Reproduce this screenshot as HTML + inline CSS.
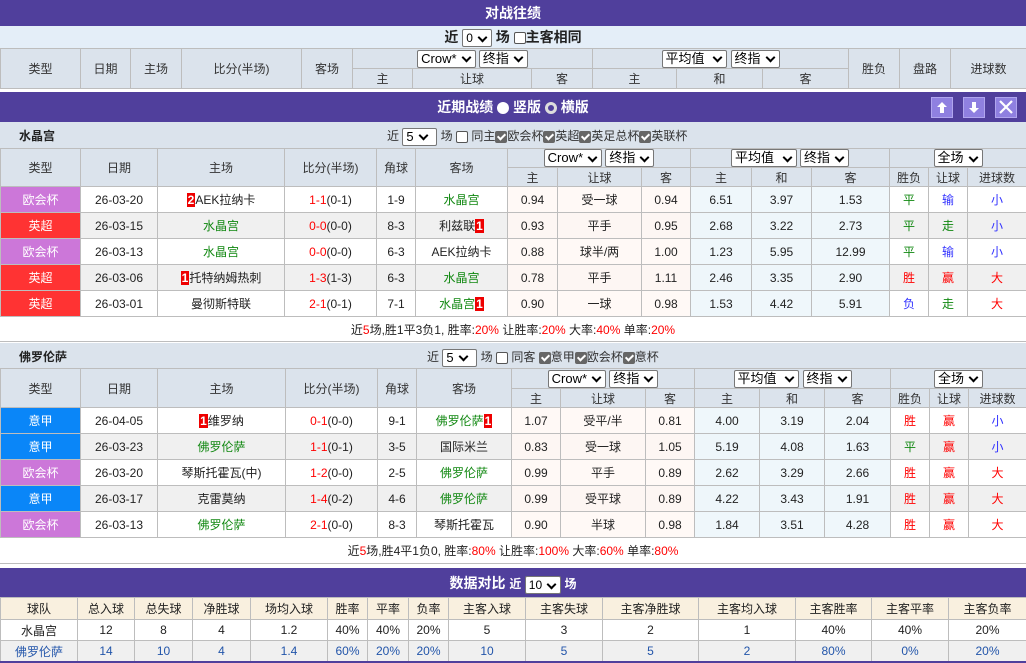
<!DOCTYPE html>
<html><head><meta charset="utf-8">
<style>
*{box-sizing:border-box;margin:0;padding:0}
body{width:1026px;height:663px;overflow:hidden;background:#fff;font-family:"Liberation Sans","Noto Sans CJK SC",sans-serif;font-size:12px;color:#222;position:relative}
.abs{position:absolute;left:0;width:1026px}
.bar{background:#503f9c;color:#fff;font-weight:bold;text-align:center;font-size:14px}
table{border-collapse:collapse;table-layout:fixed;width:1026px}
td{border:1px solid #bdbdbd;text-align:center;white-space:nowrap;overflow:hidden;padding:0}
.hd td{background:#dbe3ec;color:#333}
.sel{display:inline-block;border:1px solid #777;border-radius:2px;background:#fff;color:#000;height:18px;line-height:16px;padding:0 3px;font-size:13px;font-weight:normal;vertical-align:middle;text-align:left}
.sel:after{content:"";display:inline-block;width:5px;height:5px;border-right:2px solid #000;border-bottom:2px solid #000;transform:rotate(45deg);margin:0 2px 3px 6px;vertical-align:middle}
.cb{display:inline-block;width:12px;height:12px;border:1px solid #555;border-radius:2px;background:#fff;vertical-align:middle}
.ck{display:inline-block;width:12px;height:12px;border-radius:2px;background:#666;vertical-align:middle;position:relative}
.ck:after{content:"";position:absolute;left:4px;top:1px;width:3px;height:6px;border-right:2px solid #fff;border-bottom:2px solid #fff;transform:rotate(45deg)}
.g{color:#118811}.r{color:#ff0000}.b{color:#3333ff}
.cr{background:#fff9f6}.av{background:#eff7fb}
tr.alt td{background:#f0f0f0}
tr.alt td.cr{background:#fdf6f3}tr.alt td.av{background:#eef6fa}
tr td.ou{background:#cc77d9;color:#fff}tr td.yc{background:#ff3333;color:#fff}tr td.yj{background:#0a86f8;color:#fff}
.n{background:#e00;color:#fff;padding:0 1px;font-weight:bold}
.team{background:#dbe3ec;font-weight:bold}
.cream td{background:#f9f0df}
.blue td{color:#2255aa;background:#f0f0f0}
.ibtn{position:absolute;top:97px;width:22px;height:21px;background:#8f80e0;border:1px solid #b0a5ee}
</style></head><body>

<div class="abs bar" style="top:0;height:26px;line-height:26px">对战往绩</div>
<div class="abs" style="top:26px;height:22px;background:#e4eef8;text-align:center;font-weight:bold;font-size:14px;line-height:22px">近 <span class="sel" style="font-size:12px">0</span> 场 <span class="cb"></span>主客相同</div>

<table class="abs hd" style="top:48px">
<colgroup><col style="width:80px"><col style="width:50px"><col style="width:51px"><col style="width:120px"><col style="width:51px"><col style="width:60px"><col style="width:119px"><col style="width:61px"><col style="width:84px"><col style="width:86px"><col style="width:86px"><col style="width:51px"><col style="width:51px"><col style="width:76px"></colgroup>
<tr style="height:20px"><td rowspan="2">类型</td><td rowspan="2">日期</td><td rowspan="2">主场</td><td rowspan="2">比分(半场)</td><td rowspan="2">客场</td><td colspan="3"><span class="sel">Crow*</span> <span class="sel">终指</span></td><td colspan="3"><span class="sel">平均值 </span> <span class="sel">终指</span></td><td rowspan="2">胜负</td><td rowspan="2">盘路</td><td rowspan="2">进球数</td></tr>
<tr style="height:20px"><td>主</td><td>让球</td><td>客</td><td>主</td><td>和</td><td>客</td></tr>
</table>

<div class="abs bar" style="top:92px;height:30px;line-height:30px">近期战绩 <span style="display:inline-block;width:12px;height:12px;border-radius:50%;background:#fff;vertical-align:middle"></span> 竖版 <span style="display:inline-block;width:12px;height:12px;border-radius:50%;border:3px solid #ddd;vertical-align:middle"></span> 横版</div>
<div class="ibtn" style="left:931px"><svg width="20" height="19" viewBox="0 0 20 19"><path d="M10 4 L5 9 H8 V15 H12 V9 H15 Z" fill="#fff"/></svg></div>
<div class="ibtn" style="left:963px"><svg width="20" height="19" viewBox="0 0 20 19"><path d="M10 15 L5 10 H8 V4 H12 V10 H15 Z" fill="#fff"/></svg></div>
<div class="ibtn" style="left:995px"><svg width="20" height="19" viewBox="0 0 20 19"><path d="M4 3 L16 15 M16 3 L4 15" stroke="#fff" stroke-width="2.2"/></svg></div>

<div class="abs team" style="top:122px;height:26px;line-height:28px"><span style="position:absolute;left:19px">水晶宫</span><span style="position:absolute;left:387px;font-weight:normal;color:#333">近 <span class="sel" style="width:35px">5</span> 场 <span class="cb"></span> 同主<span class="ck"></span>欧会杯<span class="ck"></span>英超<span class="ck"></span>英足总杯<span class="ck"></span>英联杯</span></div>

<table class="abs" style="top:148px">
<colgroup><col style="width:80px"><col style="width:77px"><col style="width:127px"><col style="width:92px"><col style="width:39px"><col style="width:92px"><col style="width:50px"><col style="width:84px"><col style="width:49px"><col style="width:61px"><col style="width:60px"><col style="width:78px"><col style="width:39px"><col style="width:39px"><col style="width:59px"></colgroup>
<tbody class="hd">
<tr style="height:19px"><td rowspan="2">类型</td><td rowspan="2">日期</td><td rowspan="2">主场</td><td rowspan="2">比分(半场)</td><td rowspan="2">角球</td><td rowspan="2">客场</td><td colspan="3"><span class="sel">Crow*</span> <span class="sel">终指</span></td><td colspan="3"><span class="sel">平均值 </span> <span class="sel">终指</span></td><td colspan="3"><span class="sel">全场</span></td></tr>
<tr style="height:19px"><td>主</td><td>让球</td><td>客</td><td>主</td><td>和</td><td>客</td><td>胜负</td><td>让球</td><td>进球数</td></tr>
</tbody>
<tr style="height:26px"><td class="ou">欧会杯</td><td>26-03-20</td><td><span class="n">2</span>AEK拉纳卡</td><td><span class="r">1-1</span>(0-1)</td><td>1-9</td><td class="g">水晶宫</td><td class="cr">0.94</td><td class="cr">受一球</td><td class="cr">0.94</td><td class="av">6.51</td><td class="av">3.97</td><td class="av">1.53</td><td class="g">平</td><td class="b">输</td><td class="b">小</td></tr>
<tr class="alt" style="height:26px"><td class="yc">英超</td><td>26-03-15</td><td class="g">水晶宫</td><td><span class="r">0-0</span>(0-0)</td><td>8-3</td><td>利兹联<span class="n">1</span></td><td class="cr">0.93</td><td class="cr">平手</td><td class="cr">0.95</td><td class="av">2.68</td><td class="av">3.22</td><td class="av">2.73</td><td class="g">平</td><td class="g">走</td><td class="b">小</td></tr>
<tr style="height:26px"><td class="ou">欧会杯</td><td>26-03-13</td><td class="g">水晶宫</td><td><span class="r">0-0</span>(0-0)</td><td>6-3</td><td>AEK拉纳卡</td><td class="cr">0.88</td><td class="cr">球半/两</td><td class="cr">1.00</td><td class="av">1.23</td><td class="av">5.95</td><td class="av">12.99</td><td class="g">平</td><td class="b">输</td><td class="b">小</td></tr>
<tr class="alt" style="height:26px"><td class="yc">英超</td><td>26-03-06</td><td><span class="n">1</span>托特纳姆热刺</td><td><span class="r">1-3</span>(1-3)</td><td>6-3</td><td class="g">水晶宫</td><td class="cr">0.78</td><td class="cr">平手</td><td class="cr">1.11</td><td class="av">2.46</td><td class="av">3.35</td><td class="av">2.90</td><td class="r">胜</td><td class="r">赢</td><td class="r">大</td></tr>
<tr style="height:26px"><td class="yc">英超</td><td>26-03-01</td><td>曼彻斯特联</td><td><span class="r">2-1</span>(0-1)</td><td>7-1</td><td class="g">水晶宫<span class="n">1</span></td><td class="cr">0.90</td><td class="cr">一球</td><td class="cr">0.98</td><td class="av">1.53</td><td class="av">4.42</td><td class="av">5.91</td><td class="b">负</td><td class="g">走</td><td class="r">大</td></tr>
</table>
<div class="abs" style="top:316px;height:26px;line-height:28px;text-align:center;border-bottom:1px solid #bdbdbd">近<span class="r">5</span>场,胜1平3负1, 胜率:<span class="r">20%</span> 让胜率:<span class="r">20%</span> 大率:<span class="r">40%</span> 单率:<span class="r">20%</span></div>

<div class="abs team" style="top:343px;height:25px;line-height:28px"><span style="position:absolute;left:19px">佛罗伦萨</span><span style="position:absolute;left:427px;font-weight:normal;color:#333">近 <span class="sel" style="width:35px">5</span> 场 <span class="cb"></span> 同客 <span class="ck"></span>意甲<span class="ck"></span>欧会杯<span class="ck"></span>意杯</span></div>

<table class="abs" style="top:368px">
<colgroup><col style="width:80px"><col style="width:77px"><col style="width:128px"><col style="width:92px"><col style="width:39px"><col style="width:95px"><col style="width:49px"><col style="width:85px"><col style="width:49px"><col style="width:65px"><col style="width:65px"><col style="width:66px"><col style="width:39px"><col style="width:39px"><col style="width:58px"></colgroup>
<tbody class="hd">
<tr style="height:20px"><td rowspan="2">类型</td><td rowspan="2">日期</td><td rowspan="2">主场</td><td rowspan="2">比分(半场)</td><td rowspan="2">角球</td><td rowspan="2">客场</td><td colspan="3"><span class="sel">Crow*</span> <span class="sel">终指</span></td><td colspan="3"><span class="sel">平均值 </span> <span class="sel">终指</span></td><td colspan="3"><span class="sel">全场</span></td></tr>
<tr style="height:19px"><td>主</td><td>让球</td><td>客</td><td>主</td><td>和</td><td>客</td><td>胜负</td><td>让球</td><td>进球数</td></tr>
</tbody>
<tr style="height:26px"><td class="yj">意甲</td><td>26-04-05</td><td><span class="n">1</span>维罗纳</td><td><span class="r">0-1</span>(0-0)</td><td>9-1</td><td class="g">佛罗伦萨<span class="n">1</span></td><td class="cr">1.07</td><td class="cr">受平/半</td><td class="cr">0.81</td><td class="av">4.00</td><td class="av">3.19</td><td class="av">2.04</td><td class="r">胜</td><td class="r">赢</td><td class="b">小</td></tr>
<tr class="alt" style="height:26px"><td class="yj">意甲</td><td>26-03-23</td><td class="g">佛罗伦萨</td><td><span class="r">1-1</span>(0-1)</td><td>3-5</td><td>国际米兰</td><td class="cr">0.83</td><td class="cr">受一球</td><td class="cr">1.05</td><td class="av">5.19</td><td class="av">4.08</td><td class="av">1.63</td><td class="g">平</td><td class="r">赢</td><td class="b">小</td></tr>
<tr style="height:26px"><td class="ou">欧会杯</td><td>26-03-20</td><td>琴斯托霍瓦(中)</td><td><span class="r">1-2</span>(0-0)</td><td>2-5</td><td class="g">佛罗伦萨</td><td class="cr">0.99</td><td class="cr">平手</td><td class="cr">0.89</td><td class="av">2.62</td><td class="av">3.29</td><td class="av">2.66</td><td class="r">胜</td><td class="r">赢</td><td class="r">大</td></tr>
<tr class="alt" style="height:26px"><td class="yj">意甲</td><td>26-03-17</td><td>克雷莫纳</td><td><span class="r">1-4</span>(0-2)</td><td>4-6</td><td class="g">佛罗伦萨</td><td class="cr">0.99</td><td class="cr">受平球</td><td class="cr">0.89</td><td class="av">4.22</td><td class="av">3.43</td><td class="av">1.91</td><td class="r">胜</td><td class="r">赢</td><td class="r">大</td></tr>
<tr style="height:26px"><td class="ou">欧会杯</td><td>26-03-13</td><td class="g">佛罗伦萨</td><td><span class="r">2-1</span>(0-0)</td><td>8-3</td><td>琴斯托霍瓦</td><td class="cr">0.90</td><td class="cr">半球</td><td class="cr">0.98</td><td class="av">1.84</td><td class="av">3.51</td><td class="av">4.28</td><td class="r">胜</td><td class="r">赢</td><td class="r">大</td></tr>
</table>
<div class="abs" style="top:537px;height:27px;line-height:28px;text-align:center;border-bottom:1px solid #bdbdbd">近<span class="r">5</span>场,胜4平1负0, 胜率:<span class="r">80%</span> 让胜率:<span class="r">100%</span> 大率:<span class="r">60%</span> 单率:<span class="r">80%</span></div>

<div class="abs bar" style="top:568px;height:29px;line-height:30px">数据对比 <span style="font-size:12px">近 <span class="sel" style="font-size:12px">10</span> 场</span></div>
<table class="abs" style="top:597px">
<colgroup><col style="width:77px"><col style="width:57px"><col style="width:58px"><col style="width:58px"><col style="width:77px"><col style="width:40px"><col style="width:41px"><col style="width:40px"><col style="width:77px"><col style="width:77px"><col style="width:96px"><col style="width:97px"><col style="width:76px"><col style="width:77px"><col style="width:78px"></colgroup>
<tr class="cream" style="height:22px"><td>球队</td><td>总入球</td><td>总失球</td><td>净胜球</td><td>场均入球</td><td>胜率</td><td>平率</td><td>负率</td><td>主客入球</td><td>主客失球</td><td>主客净胜球</td><td>主客均入球</td><td>主客胜率</td><td>主客平率</td><td>主客负率</td></tr>
<tr style="height:21px"><td>水晶宫</td><td>12</td><td>8</td><td>4</td><td>1.2</td><td>40%</td><td>40%</td><td>20%</td><td>5</td><td>3</td><td>2</td><td>1</td><td>40%</td><td>40%</td><td>20%</td></tr>
<tr class="blue" style="height:21px"><td>佛罗伦萨</td><td>14</td><td>10</td><td>4</td><td>1.4</td><td>60%</td><td>20%</td><td>20%</td><td>10</td><td>5</td><td>5</td><td>2</td><td>80%</td><td>0%</td><td>20%</td></tr>
</table>
<div class="abs" style="top:661px;height:2px;background:#503f9c"></div>
</body></html>
